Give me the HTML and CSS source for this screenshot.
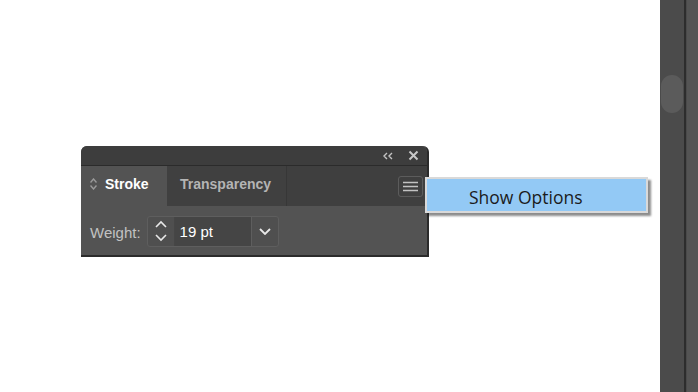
FILE: index.html
```html
<!DOCTYPE html>
<html>
<head>
  <title>Stroke panel</title>
  <link rel="stylesheet" href="styles.css">
</head>
<body>
  <div class="app">
    <div class="canvas">
      <div class="panel">
        <div class="titlebar">
          <svg class="title-icon" width="12" height="8" viewBox="0 0 12 8">
            <path d="M5 1 L2 4 L5 7 M10 1 L7 4 L10 7" fill="none" stroke="#c4c4c4" stroke-width="1.4"/>
          </svg>
          <svg class="title-icon close" width="11" height="11" viewBox="0 0 11 11">
            <path d="M1.5 1.5 L9.5 9.5 M9.5 1.5 L1.5 9.5" fill="none" stroke="#c8c8c8" stroke-width="2"/>
          </svg>
        </div>

        <div class="tabs">
          <div class="tab active">
            <svg width="7" height="12" viewBox="0 0 7 12">
              <path d="M0.5 4.5 L3.5 1 L6.5 4.5 M0.5 7.5 L3.5 11 L6.5 7.5" fill="none" stroke="#9a9a9a" stroke-width="1.4"/>
            </svg>
            Stroke
          </div>
          <div class="tab">Transparency</div>
          <div class="tab-fill"></div>
          <div class="menu-btn">
            <svg width="15" height="11" viewBox="0 0 15 11">
              <path d="M0 1.5 H15 M0 5.5 H15 M0 9.5 H15" stroke="#c2c2c2" stroke-width="1.6"/>
            </svg>
          </div>
        </div>

        <div class="panel-body">
          <span class="label">Weight:</span>
          <div class="weight-field">
            <div class="spin">
              <svg width="12" height="22" viewBox="0 0 12 22">
                <path d="M1 7 L6 2 L11 7 M1 15 L6 20 L11 15" fill="none" stroke="#e8e8e8" stroke-width="1.6"/>
              </svg>
            </div>
            <div class="value">19 pt</div>
            <div class="drop">
              <svg width="12" height="7" viewBox="0 0 12 7">
                <path d="M1 1 L6 6 L11 1" fill="none" stroke="#e8e8e8" stroke-width="1.8"/>
              </svg>
            </div>
          </div>
        </div>

        <div class="popup">Show Options</div>
      </div>
    </div>

    <div class="scrollbar">
      <div class="track">
        <div class="thumb"></div>
      </div>
      <div class="divider"></div>
      <div class="edge"></div>
    </div>
  </div>
</body>
</html>
```

FILE: styles.css
```css
body {
  margin: 0;
  background: #ffffff;
  font-family: "Liberation Sans", Arial, sans-serif;
}

.app {
  display: flex;
  height: 392px;
  overflow: hidden;
}

.canvas {
  flex: 1;
  padding-top: 146px;
  padding-left: 81px;
}

.panel {
  position: relative;
  width: 346px;
  background: #535353;
  border-right: 2px solid #2b2b2b;
  border-bottom: 2px solid #2b2b2b;
  border-top-left-radius: 6px;
  border-top-right-radius: 6px;
}

.titlebar {
  height: 19px;
  background: #3d3d3d;
  border-bottom: 1px solid #2b2b2b;
  border-top-left-radius: 6px;
  border-top-right-radius: 6px;
  display: flex;
  justify-content: flex-end;
  align-items: center;
  gap: 14px;
  padding-right: 8px;
}

.title-icon {
  display: block;
}

.tabs {
  height: 40px;
  background: #3f3f3f;
  display: flex;
  align-items: stretch;
}

.tab {
  display: flex;
  align-items: center;
  padding-bottom: 4px;
  font-size: 14px;
  font-weight: bold;
  color: #b4b4b4;
  background: #404040;
  border-right: 1px solid #373737;
  width: 106px;
  padding-left: 13px;
}

.tab.active {
  background: #535353;
  color: #ffffff;
  width: 77px;
  padding-left: 9px;
  gap: 8px;
  border-right: none;
}

.tab-fill {
  flex: 1;
}

.menu-btn {
  width: 23px;
  height: 19px;
  margin-top: 10px;
  margin-right: 4px;
  border: 1px solid #5c5c5c;
  border-radius: 3px;
  display: flex;
  align-items: center;
  justify-content: center;
}

.panel-body {
  height: 49px;
  display: flex;
  align-items: center;
  padding-left: 9px;
  gap: 6px;
}

.label {
  font-size: 15px;
  color: #c2c2c2;
  padding-top: 3px;
}

.weight-field {
  display: flex;
  height: 29px;
  margin-top: 1px;
  border: 1px solid #5e5e5e;
  border-radius: 3px;
  background: #4f4f4f;
}

.spin {
  width: 26px;
  border-right: 1px solid #464646;
  display: flex;
  align-items: center;
  justify-content: center;
}

.value {
  width: 71px;
  background: #454545;
  color: #ffffff;
  font-size: 15px;
  display: flex;
  align-items: center;
  padding-left: 5px;
  border-right: 1px solid #5e5e5e;
}

.drop {
  width: 26px;
  display: flex;
  align-items: center;
  justify-content: center;
}

.popup {
  position: absolute;
  left: 344px;
  top: 31px;
  width: 223px;
  height: 36px;
  box-sizing: border-box;
  background: #93c9f5;
  border: 2px solid #d9d9d9;
  box-shadow: 3px 3px 2px rgba(0, 0, 0, 0.45);
  font-family: "Open Sans", "Noto Sans", sans-serif;
  font-size: 17.5px;
  color: #1b1b1b;
  display: flex;
  align-items: center;
  padding-left: 42px;
  padding-top: 3px;
}

.scrollbar {
  width: 38px;
  display: flex;
}

.track {
  width: 24px;
  background: #4b4b4b;
  padding-top: 75px;
}

.thumb {
  width: 22px;
  margin-left: 1px;
  height: 38px;
  border-radius: 11px;
  background: #5b5b5b;
}

.divider {
  width: 2px;
  background: #2d2d2d;
}

.edge {
  flex: 1;
  background: #545454;
  border-left: 1px solid #4a4a4a;
}
```
